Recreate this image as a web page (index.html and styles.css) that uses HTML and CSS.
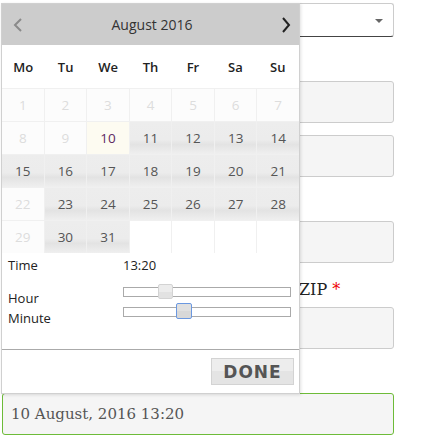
FILE: index.html
```html
<!DOCTYPE html>
<html lang="en">
<head>
    <meta charset="UTF-8">
    <meta name="viewport" content="width=device-width, initial-scale=1.0">
    <title>Checkout</title>
    <link rel="stylesheet" href="styles.css">
</head>
<body>

    <div class="form">
        <!-- Country select -->
        <div class="select"><span class="caret"></span></div>

        <div class="input gap-big"></div>
        <div class="input gap-small"></div>
        <div class="input gap-big"></div>

        <div class="label-row">
            <span></span>
            <label>ZIP <span class="req">*</span></label>
        </div>
        <div class="input"></div>

        <div class="input date-input gap-big">10 August, 2016 13:20</div>
    </div>

    <!-- Date/time picker popup -->
    <div class="picker">
        <div class="picker-header">
            <svg class="arrow" width="10" height="14" viewBox="0 0 10 14"><path d="M8 1 L2 7 L8 13" fill="none" stroke="#8a8a8a" stroke-width="2"/></svg>
            <span class="title">August 2016</span>
            <svg class="arrow" width="10" height="16" viewBox="0 0 10 16"><path d="M2 1 L8 8 L2 15" fill="none" stroke="#222" stroke-width="2"/></svg>
        </div>

        <div class="weekdays">
            <span>Mo</span><span>Tu</span><span>We</span><span>Th</span><span>Fr</span><span>Sa</span><span>Su</span>
        </div>

        <div class="days">
            <span class="off">1</span><span class="off">2</span><span class="off">3</span><span class="off">4</span><span class="off">5</span><span class="off">6</span><span class="off">7</span>
            <span class="off">8</span><span class="off">9</span><span class="today">10</span><span class="on">11</span><span class="on">12</span><span class="on">13</span><span class="on">14</span>
            <span class="on">15</span><span class="on">16</span><span class="on">17</span><span class="on">18</span><span class="on">19</span><span class="on">20</span><span class="on">21</span>
            <span class="off">22</span><span class="on">23</span><span class="on">24</span><span class="on">25</span><span class="on">26</span><span class="on">27</span><span class="on">28</span>
            <span class="off">29</span><span class="on">30</span><span class="on">31</span><span class="empty"></span><span class="empty"></span><span class="empty"></span><span class="empty"></span>
        </div>

        <div class="time-panel">
            <div class="time-row">
                <span class="tlabel">Time</span>
                <span>13:20</span>
            </div>
            <div class="slider-row">
                <span class="tlabel">Hour</span>
                <div class="track"><span class="handle hour-handle"></span></div>
            </div>
            <div class="slider-row">
                <span class="tlabel">Minute</span>
                <div class="track"><span class="handle minute-handle"></span></div>
            </div>
        </div>

        <div class="button-pane">
            <button class="done">DONE</button>
        </div>
    </div>

</body>
</html>
```

FILE: styles.css
```css
body {
    margin: 0;
    background: #fff;
    font-family: "DejaVu Serif", serif;
}

.form {
    width: 392px;
    margin: 3px 0 0 2px;
}

.select {
    height: 34px;
    box-sizing: border-box;
    border: 1px solid #ccc;
    border-bottom: 1px solid #444;
    border-radius: 3px;
    background: #fff;
    position: relative;
}

.caret {
    position: absolute;
    right: 10px;
    top: 15px;
    border-left: 4px solid transparent;
    border-right: 4px solid transparent;
    border-top: 4px solid #666;
}

.input {
    height: 42px;
    box-sizing: border-box;
    border: 1px solid #ccc;
    border-radius: 3px;
    background: #f5f5f5;
}

.gap-big {
    margin-top: 44px;
}

.gap-small {
    margin-top: 12px;
}

.label-row {
    display: grid;
    grid-template-columns: 297px 1fr;
    height: 44px;
    box-sizing: border-box;
    padding-top: 17px;
    line-height: 20px;
    font-size: 16px;
    color: #222;
}

.req {
    color: #e00;
}

.date-input {
    border: 1px solid #6dbb38;
    color: #555;
    font-size: 15px;
    line-height: 40px;
    padding-left: 8px;
}

/* popup */
.picker {
    position: absolute;
    left: 1px;
    top: 3px;
    width: 299px;
    box-sizing: border-box;
    border: 1px solid #d0d0d0;
    background: #fff;
    box-shadow: 1px 1px 3px rgba(0, 0, 0, 0.12);
    font-family: "Open Sans", sans-serif;
    color: #222;
}

.picker-header {
    height: 41px;
    background: #ccc;
    display: flex;
    align-items: center;
    justify-content: space-between;
    padding: 0 8px 0 11px;
}

.title {
    font-size: 14px;
    color: #333;
}

.weekdays {
    display: grid;
    grid-template-columns: repeat(7, 1fr);
    height: 43px;
    align-items: center;
    text-align: center;
    font-size: 13px;
    font-weight: 600;
}

.days {
    display: grid;
    grid-template-columns: repeat(7, 1fr);
    grid-auto-rows: 32px;
    gap: 1px;
    background: #f0f0f0;
    border-top: 1px solid #f0f0f0;
}

.days span {
    display: flex;
    align-items: center;
    justify-content: center;
    font-size: 13.5px;
}

.days .off {
    background: #fcfcfc;
    color: #ddd;
}

.days .on {
    background: linear-gradient(#ededed 0%, #ececec 55%, #e3e3e3 70%, #efefef 100%);
    color: #555;
}

.days .today {
    background: #fdfbf1;
    color: #5e2a63;
}

.days .empty {
    background: #fff;
}

.time-panel {
    padding: 3px 0 27px 6px;
    border-bottom: 1px solid #aaa;
    font-size: 13px;
}

.time-row {
    display: flex;
    line-height: 18px;
    margin-bottom: 8px;
}

.tlabel {
    width: 115px;
}

.slider-row {
    display: flex;
    align-items: center;
    height: 20px;
}

.slider-row .tlabel {
    margin-top: 11px;
}

.track {
    position: relative;
    width: 168px;
    height: 10px;
    box-sizing: border-box;
    border: 1px solid #aaa;
    background: #fff;
}

.handle {
    position: absolute;
    top: -4px;
    width: 15px;
    height: 15px;
    box-sizing: border-box;
    border-radius: 2px;
    border: 1px solid #d3d3d3;
    background: linear-gradient(#ececec 50%, #e2e2e2 50%);
}

.hour-handle {
    left: 34px;
}

.minute-handle {
    left: 52px;
    width: 16px;
    height: 16px;
    top: -5px;
    border: 1px solid #6b98e0;
    background: linear-gradient(#e0e0e0 50%, #d8d8d8 50%);
}

.button-pane {
    display: flex;
    justify-content: flex-end;
    padding: 8px 5px 8px 0;
}

.done {
    height: 27px;
    width: 83px;
    border: 1px solid #d3d3d3;
    background: linear-gradient(#ededed 50%, #e4e4e4 50%);
    font-family: "DejaVu Sans", sans-serif;
    font-weight: bold;
    font-size: 17px;
    letter-spacing: 1px;
    color: #555;
    padding: 0;
}
```
